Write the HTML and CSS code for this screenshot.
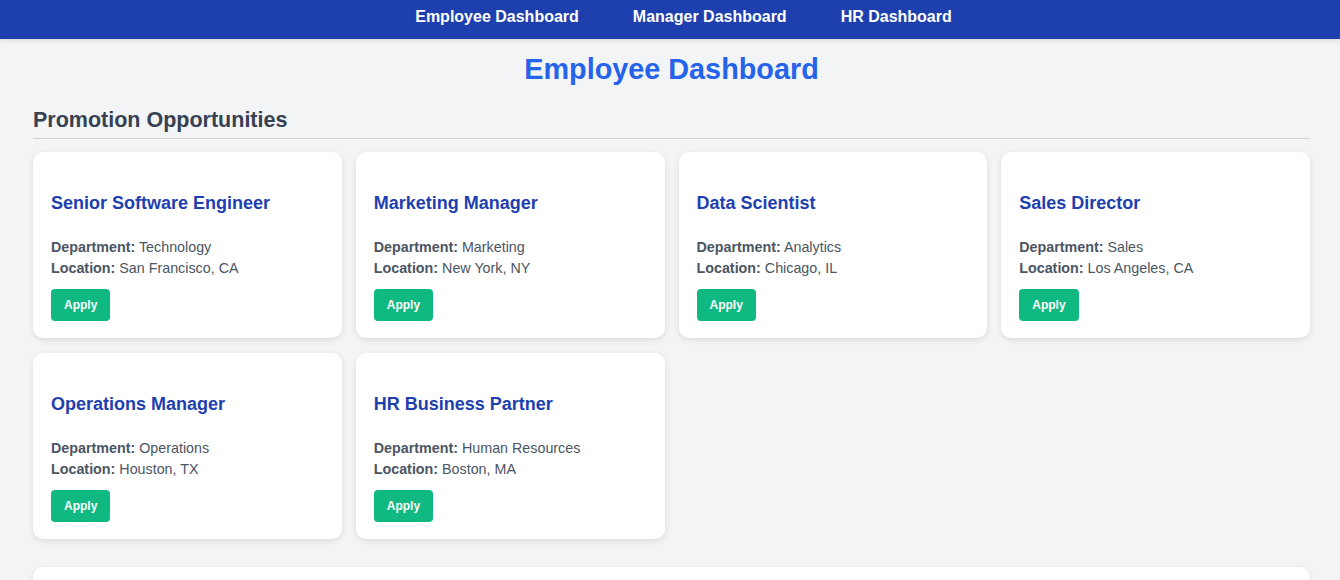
FILE: index.html
```html
<!DOCTYPE html>
<html lang="en">
<head>
<meta charset="utf-8">
<title>Employee Dashboard</title>
<link rel="stylesheet" href="styles.css">
</head>
<body>
<nav class="topnav">
  <a href="#" class="nav-link">Employee Dashboard</a>
  <a href="#" class="nav-link">Manager Dashboard</a>
  <a href="#" class="nav-link">HR Dashboard</a>
</nav>
<main class="container">
  <h1 class="page-title">Employee Dashboard</h1>
  <section class="section">
    <h2 class="section-title">Promotion Opportunities</h2>
    <div class="card-grid">
      <div class="card">
        <h3 class="card-title">Senior Software Engineer</h3>
        <p class="card-line"><strong>Department:</strong> Technology</p>
        <p class="card-line"><strong>Location:</strong> San Francisco, CA</p>
        <button class="btn-apply">Apply</button>
      </div>
      <div class="card">
        <h3 class="card-title">Marketing Manager</h3>
        <p class="card-line"><strong>Department:</strong> Marketing</p>
        <p class="card-line"><strong>Location:</strong> New York, NY</p>
        <button class="btn-apply">Apply</button>
      </div>
      <div class="card">
        <h3 class="card-title">Data Scientist</h3>
        <p class="card-line"><strong>Department:</strong> Analytics</p>
        <p class="card-line"><strong>Location:</strong> Chicago, IL</p>
        <button class="btn-apply">Apply</button>
      </div>
      <div class="card">
        <h3 class="card-title">Sales Director</h3>
        <p class="card-line"><strong>Department:</strong> Sales</p>
        <p class="card-line"><strong>Location:</strong> Los Angeles, CA</p>
        <button class="btn-apply">Apply</button>
      </div>
      <div class="card">
        <h3 class="card-title">Operations Manager</h3>
        <p class="card-line"><strong>Department:</strong> Operations</p>
        <p class="card-line"><strong>Location:</strong> Houston, TX</p>
        <button class="btn-apply">Apply</button>
      </div>
      <div class="card">
        <h3 class="card-title">HR Business Partner</h3>
        <p class="card-line"><strong>Department:</strong> Human Resources</p>
        <p class="card-line"><strong>Location:</strong> Boston, MA</p>
        <button class="btn-apply">Apply</button>
      </div>
    </div>
  </section>
  <section class="panel">
    <h2 class="panel-title">My Applications</h2>
    <p class="panel-text">You have not applied to any positions yet.</p>
  </section>
</main>
</body>
</html>
```

FILE: styles.css
```css
* { box-sizing: border-box; }

html, body {
  margin: 0;
  padding: 0;
}

body {
  background: #f3f4f6;
  font-family: "Liberation Sans", Arial, sans-serif;
  color: #374151;
}

.topnav {
  height: 39px;
  background: #1e40af;
  display: flex;
  justify-content: center;
  align-items: center;
  gap: 54px;
  padding-left: 27px;
  box-shadow: 0 2px 4px rgba(0, 0, 0, 0.1);
}

.nav-link {
  color: #ffffff;
  font-weight: bold;
  font-size: 16px;
  text-decoration: none;
  line-height: 19px;
  padding-bottom: 7px;
}

.container {
  padding: 0 30px 0 33px;
}

.page-title {
  margin: 14px 0 0;
  text-align: center;
  color: #2563eb;
  font-size: 28.8px;
  line-height: 33px;
  font-weight: bold;
}

.section-title {
  margin: 22px 0 13px;
  font-size: 21.5px;
  line-height: 25px;
  color: #374151;
  padding-bottom: 5px;
  border-bottom: 1px solid #d1d5db;
}

.card-grid {
  display: grid;
  grid-template-columns: repeat(4, 1fr);
  column-gap: 14px;
  row-gap: 15px;
}

.card {
  background: #ffffff;
  border-radius: 10px;
  box-shadow: 0 2px 6px rgba(0, 0, 0, 0.1);
  padding: 18px 18px 17px;
  height: 186px;
}

.card-title {
  margin: 23px 0 23px;
  color: #1e40af;
  font-size: 18px;
  line-height: 21px;
  font-weight: bold;
}

.card-line {
  margin: 0;
  font-size: 14.3px;
  line-height: 21px;
  color: #4b5563;
}

.card-line strong {
  color: #4b5563;
}

.btn-apply {
  display: block;
  margin-top: 10px;
  height: 32px;
  padding: 0 13px;
  border: none;
  border-radius: 4px;
  background: #10b981;
  color: #ffffff;
  font-family: "Liberation Sans", Arial, sans-serif;
  font-weight: bold;
  font-size: 12px;
  cursor: pointer;
}

.panel {
  margin-top: 28px;
  background: #ffffff;
  border-radius: 10px;
  box-shadow: 0 2px 6px rgba(0, 0, 0, 0.1);
  padding: 32px 18px 24px;
}

.panel-title {
  margin: 0 0 12px;
  font-size: 21.5px;
  color: #374151;
}

.panel-text {
  margin: 0;
  font-size: 14px;
  color: #4b5563;
}
```
